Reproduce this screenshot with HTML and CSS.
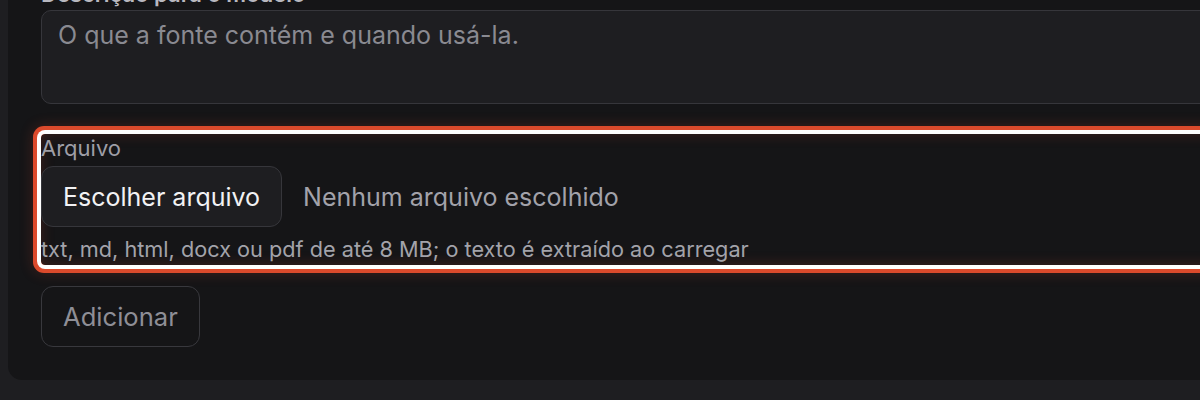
FILE: index.html
```html
<!DOCTYPE html>
<html lang="pt">
<head>
<meta charset="utf-8">
<link rel="stylesheet" href="styles.css">
</head>
<body>
<div class="card">
  <div class="field field-desc">
    <label class="label label-strong">Descrição para o modelo</label>
    <div class="textarea"><span class="placeholder">O que a fonte contém e quando usá-la.</span></div>
  </div>
  <div class="field field-focus">
    <label class="label">Arquivo</label>
    <div class="file-row">
      <span class="file-btn">Escolher arquivo</span>
      <span class="file-name">Nenhum arquivo escolhido</span>
    </div>
    <p class="hint">txt, md, html, docx ou pdf de até 8 MB; o texto é extraído ao carregar</p>
  </div>
  <div class="actions">
    <span class="btn">Adicionar</span>
  </div>
</div>
</body>
</html>
```
FILE: styles.css
```css
html, body {
  margin: 0;
  padding: 0;
  background: #1e1e21;
  overflow: hidden;
  height: 400px;
  font-family: Inter, "Noto Sans", sans-serif;
}
.card {
  margin-top: -39px;
  margin-left: 8px;
  width: 1400px;
  background: #151517;
  border-radius: 14px;
  padding: 20px 33px 33px 33px;
  box-sizing: border-box;
}
.field {
  display: flex;
  flex-direction: column;
}
.label {
  color: #9e9ea6;
  font-size: 22px;
  line-height: 27px;
}
.label-strong {
  color: #b8b8bf;
  font-weight: 600;
  margin-bottom: 2px;
}
.textarea {
  height: 94px;
  background: #1e1e21;
  border: 1px solid #36363b;
  border-radius: 10px;
  padding: 9px 16px;
  box-sizing: border-box;
}
.placeholder {
  color: #8a8a91;
  font-size: 25px;
  line-height: 31px;
}
.field-focus {
  margin-top: 30px;
  border-radius: 4px;
  box-shadow: 0 0 0 4px #ffffff, 0 0 0 8px #dc4a2c, 0 0 14px 8px rgba(220, 74, 44, 0.22), inset 0 0 14px rgba(220, 74, 44, 0.22);
  padding-bottom: 2px;
}
.field-focus .label {
  margin-top: 1px;
  margin-bottom: 4px;
}
.file-row {
  display: flex;
  align-items: center;
  gap: 21px;
}
.file-btn {
  display: flex;
  align-items: center;
  height: 61px;
  padding: 0 21px;
  box-sizing: border-box;
  background: #1e1e21;
  border: 1px solid #36363b;
  border-radius: 12px;
  color: #f2f2f4;
  font-size: 25px;
}
.file-name {
  color: #a2a2aa;
  font-size: 25px;
}
.hint {
  margin: 9px 0 0 0;
  color: #a3a3aa;
  font-size: 21.7px;
  line-height: 27px;
}
.actions {
  margin-top: 21px;
  display: flex;
}
.btn {
  display: flex;
  align-items: center;
  height: 61px;
  padding: 0 21px;
  box-sizing: border-box;
  border: 1px solid #38383d;
  border-radius: 12px;
  color: #8e8e96;
  font-size: 25.6px;
}
```
